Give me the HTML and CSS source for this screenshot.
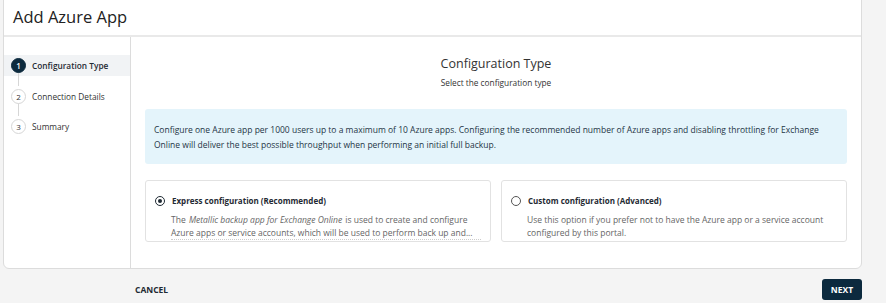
FILE: index.html
```html
<!DOCTYPE html>
<html lang="en">
<head>
    <meta charset="UTF-8">
    <title>Add Azure App</title>
    <link rel="stylesheet" href="styles.css">
</head>
<body>
    <div class="dialog">
        <div class="dialog-header">Add Azure App</div>
        <div class="dialog-body">
            <ul class="steps">
                <li class="step active"><span class="step-num">1</span>Configuration Type</li>
                <li class="step"><span class="step-num">2</span>Connection Details</li>
                <li class="step"><span class="step-num">3</span>Summary</li>
            </ul>
            <div class="pane">
                <h2 class="pane-title">Configuration Type</h2>
                <p class="pane-sub">Select the configuration type</p>
                <div class="info">
                    Configure one Azure app per 1000 users up to a maximum of 10 Azure apps. Configuring the recommended number of Azure apps and disabling throttling for Exchange Online will deliver the best possible throughput when performing an initial full backup.
                </div>
                <div class="options">
                    <div class="option">
                        <div class="option-head"><span class="radio checked"></span>Express configuration (Recommended)</div>
                        <p class="option-text more">The <i>Metallic backup app for Exchange Online</i> is used to create and configure Azure apps or service accounts, which will be used to perform back up and...</p>
                    </div>
                    <div class="option">
                        <div class="option-head"><span class="radio"></span>Custom configuration (Advanced)</div>
                        <p class="option-text">Use this option if you prefer not to have the Azure app or a service account configured by this portal.</p>
                    </div>
                </div>
            </div>
        </div>
    </div>
    <div class="footer">
        <button class="btn-link">CANCEL</button>
        <button class="btn-primary">NEXT</button>
    </div>
</body>
</html>
```

FILE: styles.css
```css
body { margin: 0; background: #f4f4f4; font-family: "Open Sans", "Liberation Sans", sans-serif; color: #1f2a33; }

.dialog { margin: -1px 24px 0 3px; background: #fff; border: 1px solid #dcdcdc; border-radius: 0 0 6px 6px; height: 268px; display: flex; flex-direction: column; }
.dialog-header { height: 35px; line-height: 33px; padding-left: 9px; font-size: 16.5px; color: #222; border-bottom: 2px solid #e9e9e9; }
.dialog-body { flex: 1; display: flex; }

.steps { list-style: none; margin: 0; padding: 18px 0 0; width: 126px; border-right: 1px solid #dcdcdc; }
.step { position: relative; display: flex; align-items: center; height: 21px; margin-bottom: 9.5px; padding-left: 7px; font-size: 8.3px; color: #333; }
.step.active { background: #f1f3f5; font-weight: 600; color: #1f2a33; }
.step-num { width: 13px; height: 13px; border-radius: 50%; border: 1px solid #d6d6d6; background: #fff; font-size: 8px; font-weight: 400; display: flex; align-items: center; justify-content: center; margin-right: 6px; z-index: 1; }
.step.active .step-num { background: #0c2a3e; border-color: #0c2a3e; color: #fff; font-weight: 600; }
.step + .step::before { content: ""; position: absolute; left: 14px; top: -17px; height: 17px; border-left: 1px solid #d6d6d6; }

.pane { flex: 1; padding: 14px 14px 0; }
.pane-title { margin: 4px 0 0; text-align: center; font-size: 12.5px; font-weight: 400; color: #333; }
.pane-sub { margin: 5px 0 0; text-align: center; font-size: 8.3px; color: #333; }

.info { margin-top: 21px; background: #e4f4fb; border-radius: 3px; padding: 13px 9px 12px; font-size: 8.5px; line-height: 15px; color: #1f3446; }

.options { display: flex; gap: 10px; margin-top: 16px; }
.option { flex: 1; height: 60px; border: 1px solid #e2e2e2; border-radius: 3px; padding: 0 9px; }
.option-head { display: flex; align-items: center; margin-top: 14px; font-size: 8px; font-weight: 700; color: #1f2a33; }
.radio { width: 8px; height: 8px; border-radius: 50%; border: 1px solid #555; margin-right: 7px; position: relative; }
.radio.checked { border-color: #1f2a33; }
.radio.checked::after { content: ""; position: absolute; left: 2px; top: 2px; width: 4px; height: 4px; border-radius: 50%; background: #1f2a33; }
.option-text { margin: 7px 0 0 16px; font-size: 8.5px; line-height: 13px; color: #666; }
.option-text i { margin: 0 1px; }
.option-text.more { border-bottom: 1px dotted #ccc; }

.footer { display: flex; justify-content: space-between; align-items: center; padding: 9px 24px 0 128px; }
.btn-link { background: none; border: none; font-family: inherit; font-size: 8.5px; font-weight: 700; color: #1f2a33; padding: 6px 7px; }
.btn-primary { background: #0c2a3e; border: none; border-radius: 3px; color: #fff; font-family: inherit; font-size: 8.5px; font-weight: 700; width: 40px; height: 21px; }
```
